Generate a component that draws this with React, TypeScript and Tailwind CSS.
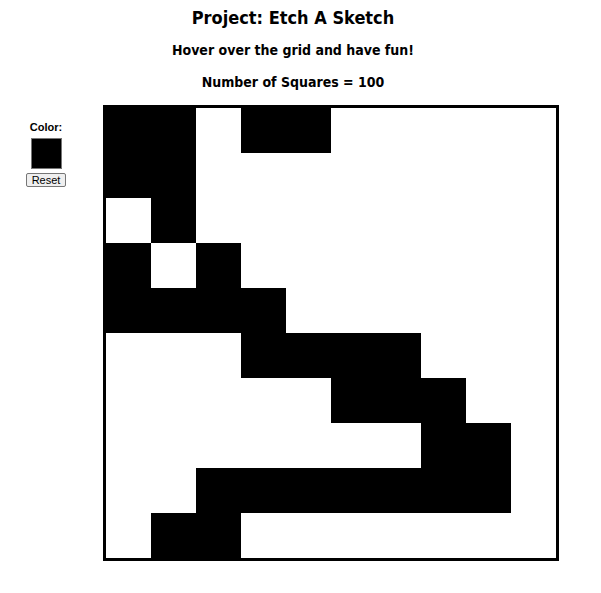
import React from "react";

const pattern = [
  "1101100000",
  "1100000000",
  "0100000000",
  "1010000000",
  "1111000000",
  "0001111000",
  "0000011100",
  "0000000110",
  "0011111110",
  "0110000000",
];

export default function App() {
  return (
    <div className="w-[586px] bg-white text-black" style={{ fontFamily: '"DejaVu Sans Condensed", "DejaVu Sans", sans-serif' }}>
      <h1 className="text-center text-[18px] font-bold leading-[22px] pt-[7px]">Project: Etch A Sketch</h1>
      <p className="text-center text-[14px] font-bold leading-[18px] mt-[12px]">Hover over the grid and have fun!</p>
      <p className="text-center text-[14px] font-bold leading-[18px] mt-[14px]">Number of Squares = 100</p>
      <div className="flex mt-[14px]">
        <div className="w-[92px] flex flex-col items-center pt-[16px]" style={{ fontFamily: '"Liberation Sans", Arial, sans-serif' }}>
          <div className="text-[11px] font-bold leading-[13px]">Color:</div>
          <div className="w-[31px] h-[31px] bg-black border border-[#767676] mt-[4px]"></div>
          <button className="mt-[4px] h-[14px] px-[5px] text-[11px] leading-[11px] bg-[#efefef] border border-[#767676] rounded-[2px]">Reset</button>
        </div>
        <div className="ml-[11px] border-[3px] border-black grid grid-cols-10 w-[456px] h-[456px]">
          {pattern.flatMap((row, r) =>
            row.split("").map((c, i) => (
              <div key={`${r}-${i}`} className={c === "1" ? "bg-black" : "bg-white"} />
            ))
          )}
        </div>
      </div>
    </div>
  );
}
